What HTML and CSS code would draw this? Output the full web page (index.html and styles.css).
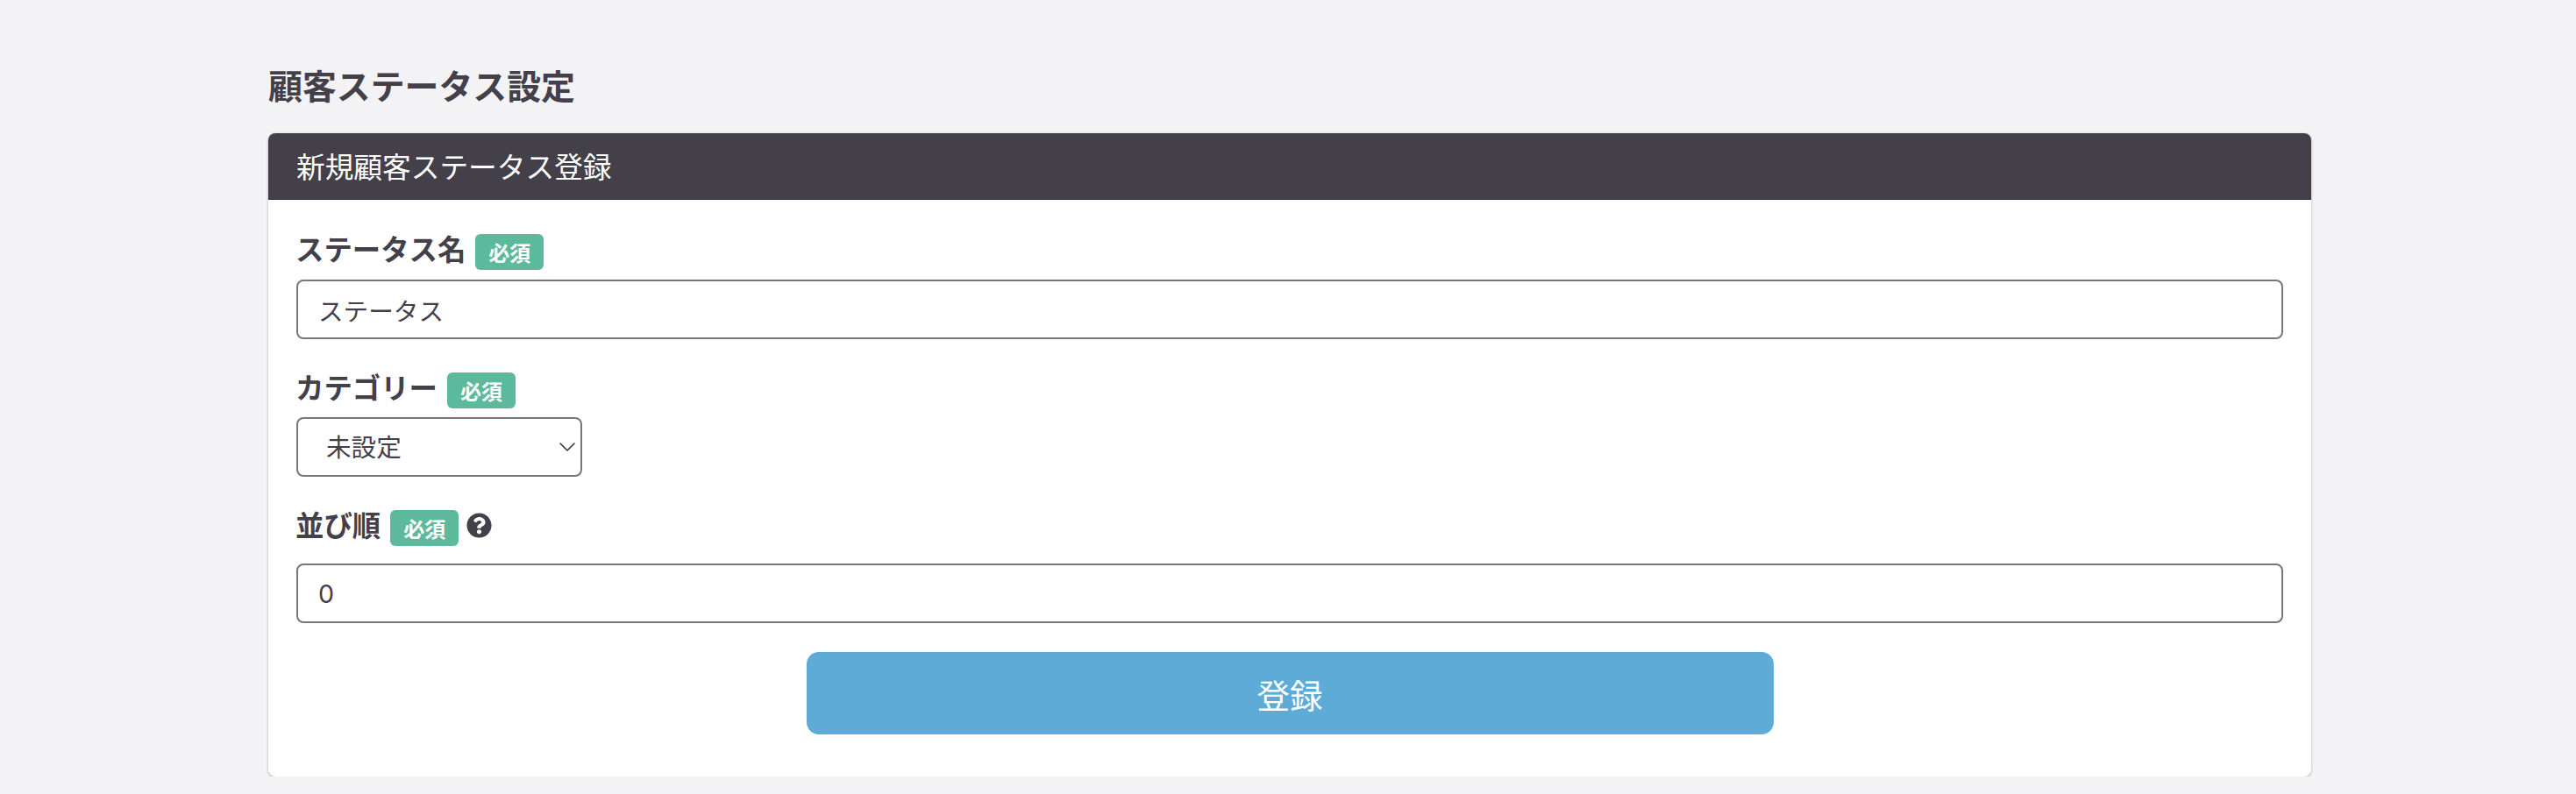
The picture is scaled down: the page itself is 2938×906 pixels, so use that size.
FILE: index.html
```html
<!DOCTYPE html>
<html lang="ja">
<head>
  <title>顧客ステータス設定</title>
  <link rel="stylesheet" href="styles.css">
</head>
<body>
  <div class="container">
    <h2 class="page-title">顧客ステータス設定</h2>

    <div class="card">
      <div class="card-header">新規顧客ステータス登録</div>
      <form class="card-body">
        <div class="field">
          <div class="label-row">
            <label class="field-label" for="status-name">ステータス名</label>
            <span class="required">必須</span>
          </div>
          <input class="text-input" type="text" id="status-name" value="ステータス">
        </div>

        <div class="field">
          <div class="label-row">
            <label class="field-label" for="category">カテゴリー</label>
            <span class="required">必須</span>
          </div>
          <div class="select-wrap">
            <select class="select-input" id="category">
              <option>未設定</option>
            </select>
            <svg class="select-arrow" viewBox="0 0 18 10" width="18" height="10">
              <path d="M1 1l8 8 8-8" fill="none" stroke="#343a40" stroke-width="1.6" stroke-linecap="round" stroke-linejoin="round"/>
            </svg>
          </div>
        </div>

        <div class="field field-help">
          <div class="label-row">
            <label class="field-label" for="sort-order">並び順</label>
            <span class="required">必須</span>
            <svg class="help-icon" viewBox="0 0 512 512" width="29" height="29">
              <path fill="#43404a" d="M504 256c0 136.997-111.043 248-248 248S8 392.997 8 256C8 119.083 119.043 8 256 8s248 111.083 248 248zM262.655 90c-54.497 0-89.255 22.957-116.549 63.758-3.536 5.286-2.353 12.415 2.715 16.258l34.699 26.31c5.205 3.947 12.621 3.008 16.665-2.122 17.864-22.658 30.113-35.797 57.303-35.797 20.429 0 45.698 13.148 45.698 32.958 0 14.976-12.363 22.667-32.534 33.976C247.128 238.528 216 254.941 216 296v4c0 6.627 5.373 12 12 12h56c6.627 0 12-5.373 12-12v-1.333c0-28.462 83.186-29.647 83.186-106.667 0-58.002-60.165-102-116.531-102zM256 338c-25.365 0-46 20.635-46 46 0 25.364 20.635 46 46 46s46-20.636 46-46c0-25.365-20.635-46-46-46z"/>
            </svg>
          </div>
          <input class="text-input" type="text" id="sort-order" value="0">
        </div>

        <div class="button-group">
          <button class="primary-btn" type="button">登録</button>
        </div>
      </form>
    </div>
  </div>
</body>
</html>
```

FILE: styles.css
```css
:root {
  --text-color: #43404a;
  --border-color: #77757e;
  --background-color: #f3f3f6;
  --badge-color: #5db99b;
  --button-color: #5dabd6;
}

body {
  margin: 0;
  background-color: var(--background-color);
  color: var(--text-color);
  font-family: Inter, "Noto Sans CJK JP", sans-serif;
}

.container {
  width: 2330px;
  margin-left: 306px;
  padding-top: 85px;
}

.page-title {
  margin: 0 0 39px 0;
  font-size: 38.9px;
  line-height: 28px;
  font-weight: 700;
}

.card {
  background: white;
  border-radius: 8px;
  box-shadow: 0 1px 3px rgba(0,0,0,0.3);
}

.card-header {
  height: 73px;
  padding: 0 32px 2px 32px;
  display: flex;
  align-items: center;
  background-color: var(--text-color);
  border-bottom: 1px solid #2b2931;
  border-radius: 8px 8px 0 0;
  color: white;
  font-size: 32.7px;
}

.card-body {
  display: flex;
  flex-direction: column;
  gap: 38px;
  padding: 39px 32px 48px 32px;
}

.label-row {
  display: flex;
  align-items: center;
  height: 41px;
  margin-bottom: 10px;
}

.field:first-child .label-row {
  margin-bottom: 11px;
}

.field-help .label-row {
  margin-bottom: 20px;
}

.field-label {
  margin-left: -1px;
  margin-bottom: 10px;
  font-size: 32.4px;
  font-weight: 700;
}

.required {
  margin-left: 11px;
  width: 78px;
  height: 41px;
  display: flex;
  align-items: center;
  justify-content: center;
  background-color: var(--badge-color);
  border-radius: 6px;
  color: white;
  font-size: 24px;
  font-weight: 700;
}

.help-icon {
  margin-left: 9px;
  margin-top: -6px;
}

.text-input, .select-input {
  display: block;
  box-sizing: border-box;
  height: 68px;
  border: 2px solid var(--border-color);
  border-radius: 8px;
  background: white;
  color: var(--text-color);
  font-family: inherit;
  font-size: 28.6px;
}

.text-input {
  width: 100%;
  padding: 0 23px;
}

.select-wrap {
  position: relative;
  width: 326px;
}

.select-input {
  width: 100%;
  padding: 0 32px;
  appearance: none;
}

.select-arrow {
  position: absolute;
  top: 29px;
  right: 8px;
}

.button-group {
  display: flex;
  justify-content: center;
  margin-top: -5px;
}

.primary-btn {
  width: 1103px;
  height: 94px;
  border: none;
  border-radius: 14px;
  background-color: var(--button-color);
  color: white;
  font-family: inherit;
  font-size: 37.5px;
  cursor: pointer;
}
```
